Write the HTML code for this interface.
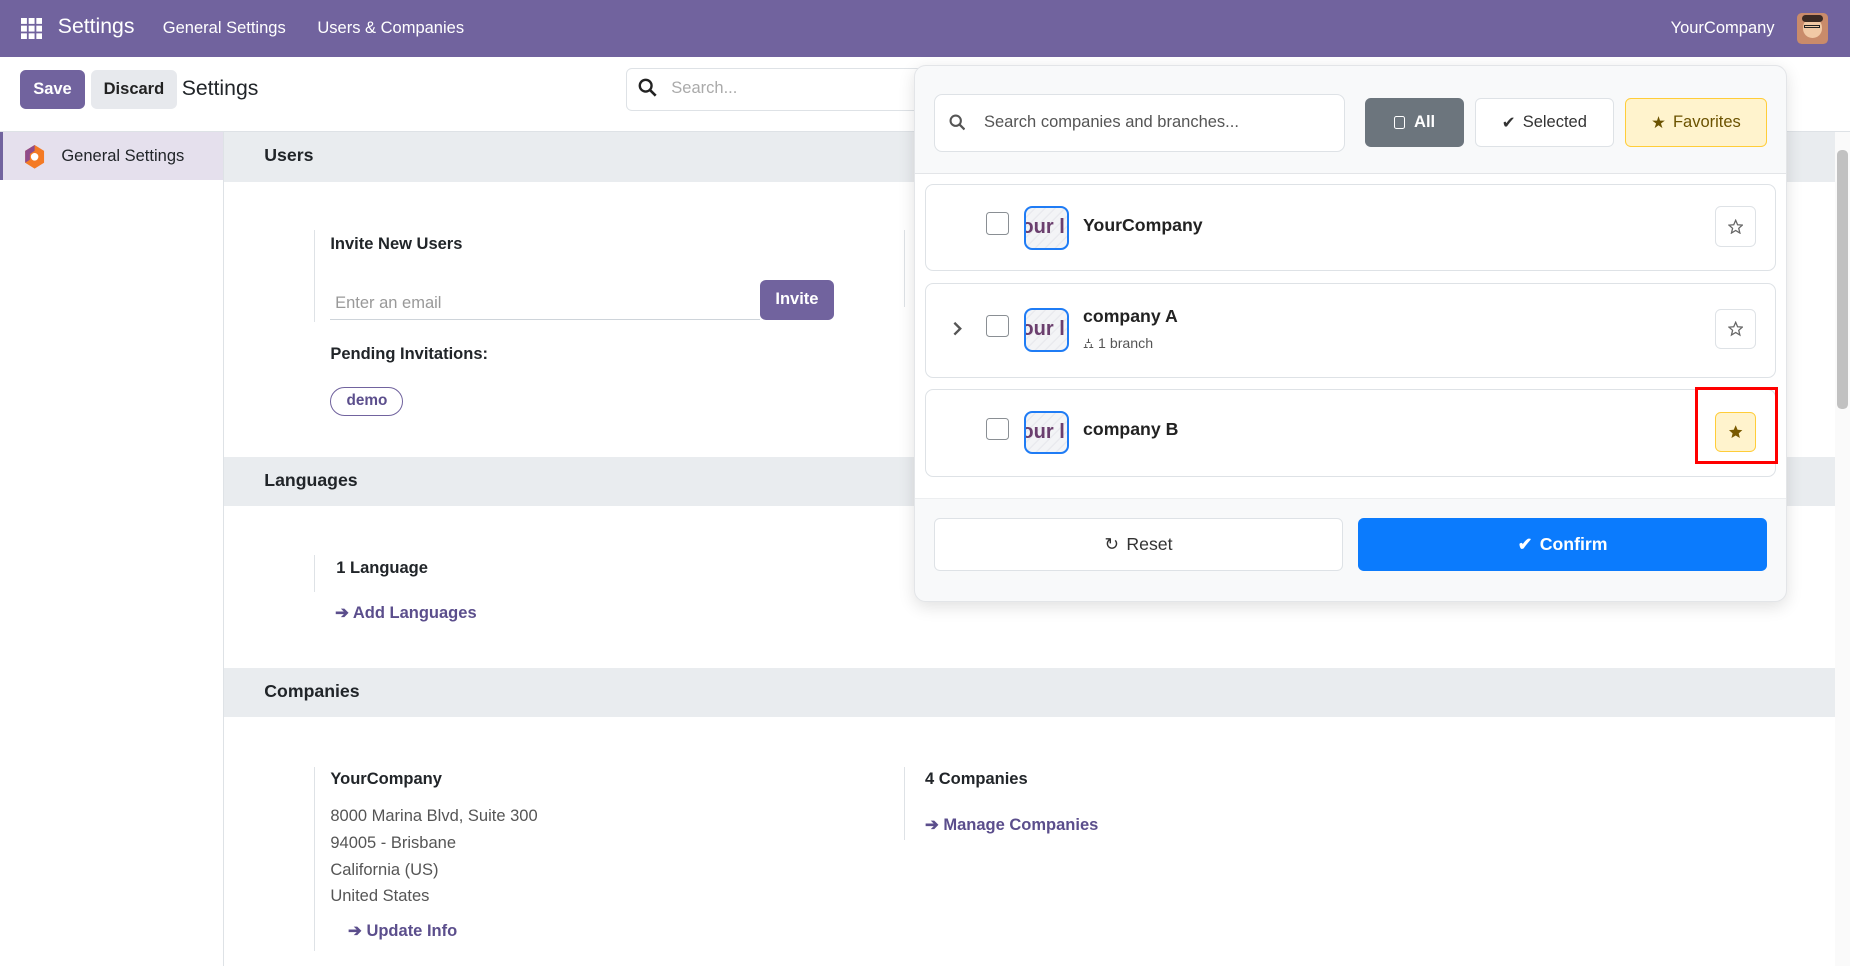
<!DOCTYPE html>
<html><head><meta charset="utf-8"><style>
*{box-sizing:border-box;margin:0;padding:0}
html,body{width:1850px;height:966px;overflow:hidden;background:#fff}
#r{zoom:1.1798;width:1568px;height:819px;position:relative;font-family:"Liberation Sans",sans-serif;color:#212529;overflow:hidden}
.a{position:absolute}
.nav{left:0;top:0;width:1568px;height:48px;background:#71639e;color:#fff}
.hdr{left:190px;width:1365px;height:42px;background:#e9ecef;font-weight:bold;font-size:15px;padding:11px 34px}
.b{font-weight:bold;font-size:14px}
.vl{width:1px;background:#dee2e6}
.lnk{color:#5b4e8c;font-weight:bold;font-size:14px}
.btn{border-radius:5px;font-size:14px;display:flex;align-items:center;justify-content:center}
.row{left:784px;width:721px;border:1px solid #dee2e6;border-radius:7px;background:#fff}
.cb{width:19px;height:19px;border:1.5px solid #8a8f94;border-radius:3px;background:#fff}
.logo{width:38px;height:37px;border:2px solid #1f7cf5;border-radius:7px;background:repeating-linear-gradient(135deg,#f3f4f6 0 5px,#e9eaee 5px 6px);overflow:hidden;color:#6b3f6e;font-weight:bold;font-size:17px;line-height:33px;text-indent:-4px;white-space:nowrap}
.nm{font-size:15px;font-weight:bold;color:#222}
.star{width:34px;height:34px;border:1px solid #dee2e6;border-radius:5px;background:#fff;display:flex;align-items:center;justify-content:center}
</style></head><body><div id="r">
<div class="a nav">
 <svg class="a" style="left:18px;top:15px" width="18" height="18" viewBox="0 0 18 18" fill="#fff"><rect x="0" y="0" width="5" height="5"/><rect x="6.5" y="0" width="5" height="5"/><rect x="13" y="0" width="5" height="5"/><rect x="0" y="6.5" width="5" height="5"/><rect x="6.5" y="6.5" width="5" height="5"/><rect x="13" y="6.5" width="5" height="5"/><rect x="0" y="13" width="5" height="5"/><rect x="6.5" y="13" width="5" height="5"/><rect x="13" y="13" width="5" height="5"/></svg>
 <div class="a" style="left:49px;top:13px;font-size:18px">Settings</div>
 <div class="a" style="left:138px;top:16px;font-size:14px">General Settings</div>
 <div class="a" style="left:269px;top:16px;font-size:14px">Users &amp; Companies</div>
 <div class="a" style="left:1416px;top:16px;font-size:14px">YourCompany</div>
 <div class="a" style="left:1523px;top:11px;width:26px;height:26px;border-radius:4px;background:#c98b6a;overflow:hidden"><div class="a" style="left:5px;top:4px;width:16px;height:17px;border-radius:8px;background:#f1c9a5"></div><div class="a" style="left:4px;top:2px;width:18px;height:6px;background:#3b2a22;border-radius:4px"></div><div class="a" style="left:6px;top:10px;width:14px;height:3px;border:1px solid #222"></div></div>
</div>
<div class="a btn" style="left:17px;top:59px;width:55px;height:33px;background:#71639e;color:#fff;font-weight:bold">Save</div>
<div class="a btn" style="left:77px;top:59px;width:73px;height:33px;background:#e7e9ed;color:#222;font-weight:bold">Discard</div>
<div class="a" style="left:154px;top:65px;font-size:18px">Settings</div>
<div class="a" style="left:531px;top:58px;width:260px;height:36px;border:1px solid #dee2e6;border-radius:5px"></div>
<svg class="a" style="left:541px;top:66px" width="16" height="16" viewBox="0 0 16 16"><circle cx="6.5" cy="6.5" r="5" stroke="#222" stroke-width="2" fill="none"/><path d="M10 10l5 5" stroke="#222" stroke-width="2.2"/></svg>
<div class="a" style="left:569px;top:67px;font-size:14px;color:#aaa">Search...</div>
<div class="a" style="left:0;top:111px;width:1568px;height:1px;background:#dee2e6"></div>
<div class="a" style="left:189px;top:112px;width:1px;height:707px;background:#dee2e6"></div>
<div class="a" style="left:0;top:112px;width:189px;height:41px;background:#e5e0ed;border-left:3px solid #71639e"></div>
<svg class="a" style="left:20px;top:123px" width="18" height="20" viewBox="0 0 18 20"><path d="M9 0L17 5V15L9 20L1 15V5Z" fill="#f47a24"/><path d="M9 0L1 5V15L5 12.5V7.5L9 5Z" fill="#8f4b8c"/><circle cx="9" cy="10" r="3.2" fill="#fff"/></svg>
<div class="a" style="left:52px;top:125px;font-size:14px">General Settings</div>
<div class="a hdr" style="top:112px">Users</div>
<div class="a vl" style="left:266px;top:195px;height:78px"></div>
<div class="a vl" style="left:766px;top:195px;height:65px"></div>
<div class="a b" style="left:280px;top:199px">Invite New Users</div>
<div class="a" style="left:280px;top:270px;width:364px;height:1px;background:#ced4da"></div>
<div class="a" style="left:284px;top:249px;font-size:14px;color:#999">Enter an email</div>
<div class="a btn" style="left:644px;top:237px;width:63px;height:34px;background:#71639e;color:#fff;font-weight:bold">Invite</div>
<div class="a b" style="left:280px;top:292px">Pending Invitations:</div>
<div class="a" style="left:280px;top:328px;width:62px;height:25px;border:1.5px solid #71639e;border-radius:13px;color:#5b4e8c;font-weight:bold;font-size:13px;text-align:center;line-height:22px">demo</div>
<div class="a hdr" style="top:387px">Languages</div>
<div class="a vl" style="left:266px;top:470px;height:32px"></div>
<div class="a b" style="left:285px;top:474px">1 Language</div>
<div class="a lnk" style="left:284px;top:511px">➔ Add Languages</div>
<div class="a hdr" style="top:566px">Companies</div>
<div class="a vl" style="left:266px;top:650px;height:156px"></div>
<div class="a vl" style="left:766px;top:650px;height:62px"></div>
<div class="a b" style="left:280px;top:653px">YourCompany</div>
<div class="a" style="left:280px;top:681px;font-size:14px;color:#555;line-height:22.5px">8000 Marina Blvd, Suite 300<br>94005 - Brisbane<br>California (US)<br>United States</div>
<div class="a lnk" style="left:295px;top:781px">➔ Update Info</div>
<div class="a b" style="left:784px;top:653px">4 Companies</div>
<div class="a lnk" style="left:784px;top:691px">➔ Manage Companies</div>
<div class="a" style="left:1555px;top:112px;width:13px;height:707px;background:#fafafa"></div>
<div class="a" style="left:1557px;top:127px;width:9px;height:220px;background:#c1c1c1;border-radius:4px"></div>
<!-- dropdown -->
<div class="a" style="left:775px;top:55px;width:740px;height:455px;background:#f8f9fa;border:1px solid #e3e5e8;border-radius:10px;box-shadow:0 4px 14px rgba(0,0,0,.12);overflow:hidden">
 <div class="a" style="left:0;top:91px;width:740px;height:276px;background:#fff;border-top:1px solid #e3e5e8;border-bottom:1px solid #eceef0"></div>
</div>
<div class="a" style="left:792px;top:80px;width:348px;height:49px;background:#fff;border:1px solid #dee2e6;border-radius:7px"></div>
<svg class="a" style="left:804px;top:97px" width="14" height="14" viewBox="0 0 16 16"><circle cx="6.5" cy="6.5" r="5" stroke="#555" stroke-width="2" fill="none"/><path d="M10 10l5 5" stroke="#555" stroke-width="2.2"/></svg>
<div class="a" style="left:834px;top:96px;font-size:14px;color:#555">Search companies and branches...</div>
<div class="a btn" style="left:1157px;top:83px;width:84px;height:42px;background:#6c757d;color:#fff;font-weight:bold"><span style="display:inline-block;width:9px;height:11px;border:1.5px solid #fff;border-radius:2px;margin-right:8px"></span>All</div>
<div class="a btn" style="left:1250px;top:83px;width:118px;height:42px;background:#fff;border:1px solid #dee2e6;color:#333"><span style="margin-right:6px">✔</span>Selected</div>
<div class="a btn" style="left:1377px;top:83px;width:121px;height:42px;background:#fff3cd;border:1px solid #ffcd39;color:#6b5200"><span style="margin-right:6px">★</span>Favorites</div>
<div class="a row" style="top:156px;height:74px"></div>
<div class="a row" style="top:240px;height:80px"></div>
<div class="a row" style="top:330px;height:74px"></div>
<div class="a cb" style="left:836px;top:180px"></div>
<div class="a cb" style="left:836px;top:267px"></div>
<div class="a cb" style="left:836px;top:354px"></div>
<div class="a logo" style="left:868px;top:175px">our l</div>
<div class="a logo" style="left:868px;top:261px">our l</div>
<div class="a logo" style="left:868px;top:348px">our l</div>
<div class="a nm" style="left:918px;top:182px">YourCompany</div>
<div class="a nm" style="left:918px;top:259px">company A</div>
<div class="a" style="left:918px;top:284px;font-size:12px;color:#555">⛼ 1 branch</div>
<div class="a nm" style="left:918px;top:355px">company B</div>
<svg class="a" style="left:807px;top:272px" width="9" height="13" viewBox="0 0 9 13"><path d="M2 1.5L7 6.5L2 11.5" stroke="#555" stroke-width="2" fill="none"/></svg>
<div class="a star" style="left:1454px;top:175px"><svg width="13" height="13" viewBox="0 0 24 24"><path d="M12 2l3 7 7.5.6-5.7 5 1.8 7.4L12 18l-6.6 4 1.8-7.4-5.7-5L9 9z" fill="none" stroke="#666" stroke-width="2"/></svg></div>
<div class="a star" style="left:1454px;top:262px"><svg width="13" height="13" viewBox="0 0 24 24"><path d="M12 2l3 7 7.5.6-5.7 5 1.8 7.4L12 18l-6.6 4 1.8-7.4-5.7-5L9 9z" fill="none" stroke="#666" stroke-width="2"/></svg></div>
<div class="a star" style="left:1454px;top:349px;background:#fff3cd;border-color:#ffcd39"><svg width="13" height="13" viewBox="0 0 24 24"><path d="M12 2l3 7 7.5.6-5.7 5 1.8 7.4L12 18l-6.6 4 1.8-7.4-5.7-5L9 9z" fill="#7a5a00"/></svg></div>
<div class="a" style="left:1437px;top:328px;width:70px;height:65px;border:3px solid #f00"></div>
<div class="a btn" style="left:792px;top:439px;width:346px;height:45px;background:#fff;border:1px solid #dee2e6;color:#333;font-size:15px"><span style="margin-right:6px">↻</span>Reset</div>
<div class="a btn" style="left:1151px;top:439px;width:347px;height:45px;background:#0b7bfd;color:#fff;font-weight:bold;font-size:15px"><span style="margin-right:6px">✔</span>Confirm</div>
</div></body></html>
